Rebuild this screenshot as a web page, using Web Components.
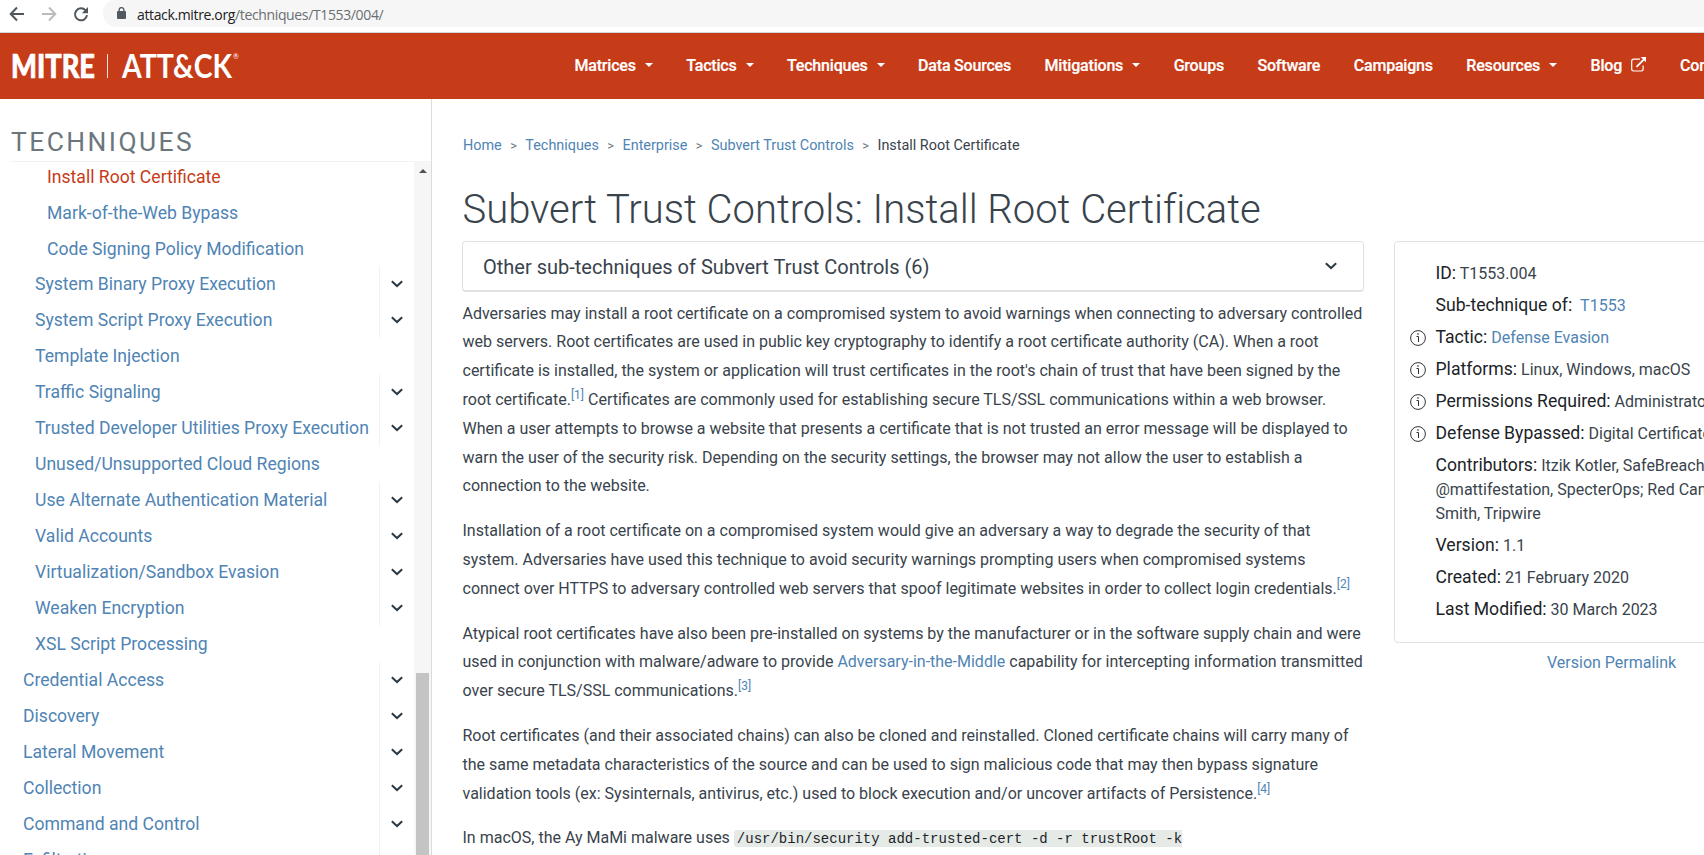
<!DOCTYPE html>
<html lang="en">
<head>
<meta charset="utf-8">
<title>Subvert Trust Controls: Install Root Certificate</title>
<style>
html,body{margin:0;height:100%;overflow:hidden;background:#fff}
body{font-family:Roboto,"Liberation Sans",sans-serif;font-size:16px;color:#39434c;white-space:nowrap}
</style>
</head>
<body>
<attack-page></attack-page>
<script>
const define=(name,html)=>customElements.define(name,class extends HTMLElement{
  constructor(){super();this.attachShadow({mode:'open'})}
  connectedCallback(){
    this.shadowRoot.innerHTML=typeof html==='function'?html(this):html;
  }
});

define('chevron-icon',`<style>:host{display:block;width:12px;height:8px}svg{display:block}</style>
<svg width="12" height="8" viewBox="0 0 12 8"><path d="M.8 1.300 6 6.100 11.200 1.300" fill="none" stroke="#2b3a42" stroke-width="2"/></svg>`);

define('browser-bar',`<style>
:host{display:flex;height:32px;border-bottom:1px solid #d3d8dc;background:#fff;box-sizing:content-box;font-family:"Open Sans","Noto Sans",sans-serif}
.icons{display:flex;width:103px;height:28px;flex:none}
.pill{flex:1;height:28px;margin-top:-1px;background:#f6f6f6;border-radius:14px 0 0 14px;display:flex;align-items:center;padding-left:14px;color:#6a6e72;font-size:14px}
.pill svg{margin-right:11px;flex:none}
b{font-weight:400;color:#202124}.u{letter-spacing:-.36px;margin-top:2px}
</style>
<svg class="icons" viewBox="0 0 103 28" fill="none" stroke-width="2">
<g stroke="#4f565c"><path d="M24 14H11M17 7.5 10.7 14l6.3 6.5"/></g>
<g stroke="#b9bcbf"><path d="M42 14h13M49 7.5l6.300 6.500-6.300 6.500"/></g>
<path d="M85.600 10.400A6 6 0 1 0 87 15.200" stroke="#4f565c"/><path d="M88 7v6.200h-6.200z" fill="#4f565c"/></svg>
<div class="pill"><svg width="9" height="12" viewBox="0 0 9 12"><rect x="0" y="4" width="9" height="8" rx="1" fill="#515a61"/><path d="M2.100 5V3a2.400 2.400 0 0 1 4.800 0v2" fill="none" stroke="#515a61" stroke-width="1.300"/></svg><span class="u"><b>attack.mitre.org</b>/techniques/T1553/004/</span></div>`);

define('nav-item',el=>`<style>
:host{display:flex;align-items:center;color:#fff;font-weight:500;font-size:16px;letter-spacing:-.2px;margin-right:33.500px;flex:none;-webkit-text-stroke:.2px #fff}
.c{border:4px solid transparent;border-top-color:#fff;border-bottom:0;margin-left:9px}
svg{margin-left:8.500px;margin-top:-1px}
</style><slot></slot>${el.hasAttribute('menu')?'<i class="c"></i>':''}${el.hasAttribute('external')?`<svg width="16" height="15" viewBox="0 0 16 15" fill="none" stroke="#fff" stroke-width="1.200"><path d="M9 2.200H2.600A1.900 1.900 0 0 0 .7 4.100v8A1.900 1.900 0 0 0 2.600 14h7.600a1.900 1.900 0 0 0 1.900-1.900V8.500"/><path d="M5.500 9.800 13 2.300" stroke-width="1.900"/><path d="M9.700 0H15v5.300z" fill="#fff" stroke="none"/></svg>`:''}`);

define('site-header',`<style>
:host{display:flex;height:66px;background:#c63b18;overflow:hidden}
svg{flex:none;display:block}
nav{display:flex;align-items:center;margin-left:324.500px;padding-bottom:2px}
</style>
<svg width="250" height="66" viewBox="0 0 250 66" fill="#fff">
<text x="11" y="45" font-family="Lato" font-weight="900" font-size="33" textLength="84" lengthAdjust="spacingAndGlyphs" stroke="#fff" stroke-width=".7">MITRE</text>
<rect x="107" y="21" width="1" height="24" opacity=".85"/>
<text x="122" y="45" font-family="Lato" font-weight="700" font-size="33" textLength="110" lengthAdjust="spacingAndGlyphs">ATT&amp;CK</text>
<text x="233" y="26" font-family="Lato" font-size="7">®</text></svg>
<nav><nav-item menu>Matrices</nav-item><nav-item menu>Tactics</nav-item><nav-item menu>Techniques</nav-item><nav-item>Data Sources</nav-item><nav-item menu>Mitigations</nav-item><nav-item>Groups</nav-item><nav-item>Software</nav-item><nav-item>Campaigns</nav-item><nav-item menu>Resources</nav-item><nav-item external>Blog</nav-item><nav-item>Contribute</nav-item></nav>`);

define('side-item',el=>`<style>
:host{display:flex;height:36px;flex:none;color:#4f84b4;font-size:17.600px;line-height:36px}
:host([active]){color:#c63b18}
:host([last]){height:35px}
.t{flex:1;padding-left:${{1:12,2:24,3:36}[el.getAttribute('level')]}px}
.x{width:34px;border-left:1px solid #f1f2f2;display:flex;align-items:center;justify-content:center}
</style><div class="t"><slot></slot></div>${el.hasAttribute('expandable')?'<div class="x"><chevron-icon></chevron-icon></div>':''}`);

const items=[[3,'Install Root Certificate','active'],[3,'Mark-of-the-Web Bypass',''],[3,'Code Signing Policy Modification','last'],
[2,'System Binary Proxy Execution','expandable'],[2,'System Script Proxy Execution','expandable'],[2,'Template Injection',''],[2,'Traffic Signaling','expandable'],
[2,'Trusted Developer Utilities Proxy Execution','expandable'],[2,'Unused/Unsupported Cloud Regions',''],[2,'Use Alternate Authentication Material','expandable'],
[2,'Valid Accounts','expandable'],[2,'Virtualization/Sandbox Evasion','expandable'],[2,'Weaken Encryption','expandable'],[2,'XSL Script Processing',''],
[1,'Credential Access','expandable'],[1,'Discovery','expandable'],[1,'Lateral Movement','expandable'],[1,'Collection','expandable'],[1,'Command and Control','expandable'],[1,'Exfiltration','expandable']];

define('side-nav',`<style>
:host{display:flex;flex-direction:column;width:431px;border-right:1px solid #dcdcdc;flex:none;overflow:hidden}
h2{margin:0 0 0 11px;height:62px;flex:none;border-bottom:1px solid #f1f2f2;font:400 26.400px/87px Roboto,sans-serif;letter-spacing:2.450px;color:#6b767d}
.b{flex:1;display:flex;min-height:0}
.l{flex:1;display:flex;flex-direction:column;margin-left:11px;margin-top:-3px;overflow:hidden}
.s{width:17px;background:#f6f6f6;display:flex;flex-direction:column;align-items:center;margin-top:-1px}
.s i{border:4px solid transparent;border-bottom-color:#505050;border-top:0;margin-top:8px}
.s div{width:13px;background:#c4c4c4;margin-top:500px;flex:1}
</style><h2>TECHNIQUES</h2><div class="b"><div class="l">${items.map(([l,t,a])=>`<side-item level="${l}" ${a}>${t}</side-item>`).join('')}</div><div class="s"><i></i><div></div></div></div>`);

define('bread-crumbs',`<style>
:host{display:flex;font-size:14.400px;line-height:20px;color:#4f84b4}
i{font-style:normal;color:#6b767d;font-size:13px;margin:0 8.400px}b{font-weight:400;color:#39434c}
</style><span>Home</span><i>&gt;</i><span>Techniques</span><i>&gt;</i><span>Enterprise</span><i>&gt;</i><span>Subvert Trust Controls</span><i>&gt;</i><b>Install Root Certificate</b>`);

define('expand-card',`<style>
:host{display:flex;box-sizing:border-box;width:902px;height:51px;border:1px solid #dfe2e2;border-bottom-width:2px;border-radius:4px;align-items:center;justify-content:space-between;padding:1px 26px 0 20px;font-size:20px}
chevron-icon{margin-top:-1px}
</style><slot></slot><chevron-icon></chevron-icon>`);

define('article-body',`<style>
:host{display:block;margin-top:7.600px}
p{margin:0 0 16px;line-height:28.800px}a{color:#4f84b4}
sup{font-size:12px;line-height:0;vertical-align:baseline;position:relative;top:-6px;color:#4f84b4}
code{font:14px "Liberation Mono",monospace;background:#e5eae7;color:#202428;padding:1px 0 0 3px;border-radius:3px 0 0 3px}
</style>
<p>Adversaries may install a root certificate on a compromised system to avoid warnings when connecting to adversary controlled<br>web servers. Root certificates are used in public key cryptography to identify a root certificate authority (CA). When a root<br>certificate is installed, the system or application will trust certificates in the root's chain of trust that have been signed by the<br>root certificate.<sup>[1]</sup> Certificates are commonly used for establishing secure TLS/SSL communications within a web browser.<br>When a user attempts to browse a website that presents a certificate that is not trusted an error message will be displayed to<br>warn the user of the security risk. Depending on the security settings, the browser may not allow the user to establish a<br>connection to the website.</p>
<p>Installation of a root certificate on a compromised system would give an adversary a way to degrade the security of that<br>system. Adversaries have used this technique to avoid security warnings prompting users when compromised systems<br>connect over HTTPS to adversary controlled web servers that spoof legitimate websites in order to collect login credentials.<sup>[2]</sup></p>
<p>Atypical root certificates have also been pre-installed on systems by the manufacturer or in the software supply chain and were<br>used in conjunction with malware/adware to provide <a>Adversary-in-the-Middle</a> capability for intercepting information transmitted<br>over secure TLS/SSL communications.<sup>[3]</sup></p>
<p>Root certificates (and their associated chains) can also be cloned and reinstalled. Cloned certificate chains will carry many of<br>the same metadata characteristics of the source and can be used to sign malicious code that may then bypass signature<br>validation tools (ex: Sysinternals, antivirus, etc.) used to block execution and/or uncover artifacts of Persistence.<sup>[4]</sup></p>
<p>In macOS, the Ay MaMi malware uses <code>/usr/bin/security add-trusted-cert -d -r trustRoot -k</code></p>`);

define('info-row',el=>`<style>
:host{display:flex;margin-bottom:8px;line-height:24px}
.i{width:26px;height:24px;flex:none;display:flex;align-items:center}
b{font-weight:400;color:#1c2327;font-size:17.600px;line-height:20px}
</style><div class="i">${el.hasAttribute('tip')?'<svg width="16" height="16" viewBox="0 0 16 16" fill="none" stroke="#2e3338"><circle cx="8" cy="8" r="7.400"/><path d="M8.500 6.500V12M6.500 6.500h2M8 3v2" stroke-width="1"/></svg>':''}</div><div><b>${el.getAttribute('label')}:</b> <slot></slot></div>`);

define('info-card',`<style>
:host{display:block;flex:none;width:420px}
.c{box-sizing:border-box;height:402px;border:1px solid #dfe2e2;border-radius:4px;padding:20px 0 0 14.500px}
a{color:#4f84b4}.v{margin:8px 0 0 153px;line-height:24px}
</style><div class="c">
<info-row label="ID">T1553.004</info-row><info-row label="Sub-technique of">&nbsp;<a>T1553</a></info-row>
<info-row label="Tactic" tip><a>Defense Evasion</a></info-row><info-row label="Platforms" tip>Linux, Windows, macOS</info-row>
<info-row label="Permissions Required" tip>Administrator, User</info-row><info-row label="Defense Bypassed" tip>Digital Certificate Validation</info-row>
<info-row label="Contributors">Itzik Kotler, SafeBreach; Matt Graeber,<br>@mattifestation, SpecterOps; Red Canary; Travis<br>Smith, Tripwire</info-row>
<info-row label="Version">1.1</info-row><info-row label="Created">21 February 2020</info-row><info-row label="Last Modified">30 March 2023</info-row>
</div><div class="v"><a>Version Permalink</a></div>`);

define('attack-page',`<style>
:host{display:flex;flex-direction:column;height:855px;width:1704px;overflow:hidden}
.m{display:flex;flex:1;min-height:0}
main{flex:1;min-width:0;padding:37px 0 0 30px;overflow:hidden}
h1{font:300 40px/48px Roboto,sans-serif;margin:30px 0 7px;padding-left:.5px;letter-spacing:-.02px}
bread-crumbs{padding-left:1px}
.r{display:flex;gap:30px}.body{width:902px;flex:none}article-body{padding-left:.5px}
</style><browser-bar></browser-bar><site-header></site-header>
<div class="m"><side-nav></side-nav><main><bread-crumbs></bread-crumbs><h1>Subvert Trust Controls: Install Root Certificate</h1>
<div class="r"><div class="body"><expand-card>Other sub-techniques of Subvert Trust Controls (6)</expand-card><article-body></article-body></div><info-card></info-card></div></main></div>`);
</script>
</body>
</html>
